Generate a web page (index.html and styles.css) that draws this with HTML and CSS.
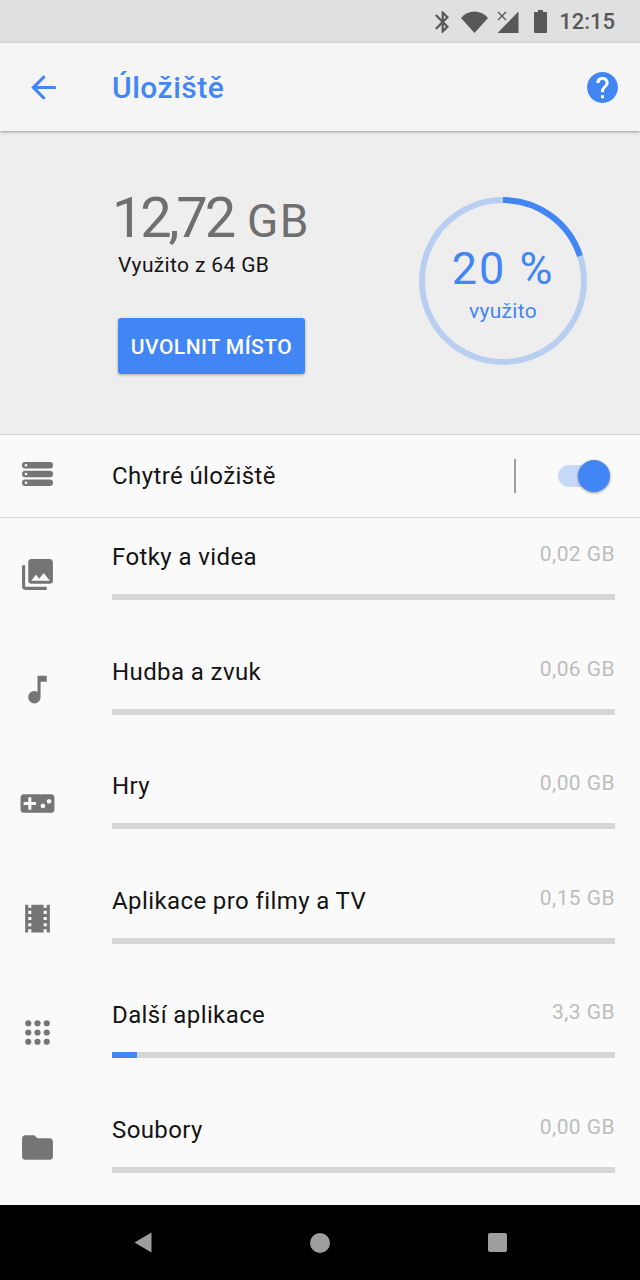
FILE: index.html
```html
<!DOCTYPE html>
<html lang="cs">
<head>
    <meta charset="UTF-8">
    <meta name="viewport" content="width=device-width, initial-scale=1.0">
    <title>Úložiště</title>
    <link rel="stylesheet" href="styles.css">
</head>
<body>
    <div class="status-bar">
        <svg class="st-bluetooth" viewBox="5 2 12.71 20"><path d="M17.71 7.71L12 2h-1v7.59L6.41 5 5 6.41 10.59 12 5 17.59 6.41 19 11 14.41V22h1l5.71-5.71-4.3-4.29 4.3-4.29zM13 5.83l1.88 1.88L13 9.59V5.83zm1.88 10.46L13 18.17v-3.76l1.88 1.88z"/></svg>
        <svg class="st-wifi" viewBox="0 0 27 22"><path d="M0 7C3.500 2.800 8 .5 13.500 .5S23.500 2.800 27 7L13.500 22Z"/></svg>
        <svg class="st-signal" viewBox="0 0 22 22"><path d="M21.500 .5V22H.5Z"/><path class="st-cross" d="M1 1L9 9M9 1L1 9"/></svg>
        <svg class="st-battery" viewBox="0 0 13 23"><path d="M4 0h5v2h3a1 1 0 0 1 1 1v19a1 1 0 0 1-1 1H1a1 1 0 0 1-1-1V3a1 1 0 0 1 1-1h3z"/></svg>
        <span class="st-time">12:15</span>
    </div>

    <div class="toolbar">
        <svg class="icon icon-blue" viewBox="0 0 24 24"><path d="M20 11H7.830l5.590-5.590L12 4l-8 8 8 8 1.410-1.410L7.830 13H20v-2z"/></svg>
        <div class="toolbar-title">Úložiště</div>
        <svg class="icon icon-blue" viewBox="0 0 24 24"><circle class="help-bg" cx="12" cy="12" r="7"/><path d="M12 2C6.480 2 2 6.480 2 12s4.480 10 10 10 10-4.480 10-10S17.520 2 12 2zm1 17h-2v-2h2v2zm2.070-7.750l-.9.920C13.450 12.900 13 13.500 13 15h-2v-.5c0-1.100.45-2.100 1.170-2.830l1.240-1.260c.37-.36.59-.86.59-1.410 0-1.100-.9-2-2-2s-2 .9-2 2H8c0-2.210 1.790-4 4-4s4 1.790 4 4c0 .88-.36 1.680-.93 2.250z"/></svg>
    </div>

    <div class="summary">
        <div class="summary-left">
            <div class="used"><span class="used-num">12,72</span><span class="used-unit">GB</span></div>
            <div class="used-of">Využito z 64 GB</div>
            <div class="free-btn">UVOLNIT MÍSTO</div>
        </div>
        <div class="gauge">
            <svg class="gauge-ring" viewBox="0 0 168 168">
                <circle class="gauge-track" cx="84" cy="84" r="81"/>
                <path class="gauge-value" d="M84 3A81 81 0 0 1 161 59"/>
            </svg>
            <div class="gauge-text">
                <div class="gauge-pct">20 %</div>
                <div class="gauge-label">využito</div>
            </div>
        </div>
    </div>

    <div class="smart-row">
        <div class="icon-col">
            <svg class="icon" viewBox="0 0 37 37">
                <rect x="3" y="4" width="31" height="6.400" rx="3.200"/>
                <rect x="3" y="12.800" width="31" height="6.400" rx="3.200"/>
                <rect x="3" y="21.600" width="31" height="6.400" rx="3.200"/>
                <circle class="icon-hole" cx="7" cy="7.200" r="1.300"/>
                <circle class="icon-hole" cx="7" cy="16" r="1.300"/>
                <circle class="icon-hole" cx="7" cy="24.800" r="1.300"/>
            </svg>
        </div>
        <div class="smart-title">Chytré úložiště</div>
        <div class="smart-divider"></div>
        <div class="switch"><div class="switch-thumb"></div></div>
    </div>

    <div class="list">
        <div class="item">
            <div class="icon-col"><svg class="icon" viewBox="0 0 24 24"><path d="M22 16V4c0-1.100-.9-2-2-2H8c-1.100 0-2 .9-2 2v12c0 1.100.9 2 2 2h12c1.100 0 2-.9 2-2zm-11-4l2.030 2.710L16 11l4 5H8l3-4zM2 6v14c0 1.100.9 2 2 2h14v-2H4V6H2z"/></svg></div>
            <div class="item-body">
                <div class="item-head"><span class="item-title">Fotky a videa</span><span class="item-size">0,02 GB</span></div>
                <div class="bar"></div>
            </div>
        </div>
        <div class="item">
            <div class="icon-col"><svg class="icon" viewBox="0 0 24 24"><path d="M12 3v10.550c-.59-.34-1.270-.55-2-.55-2.210 0-4 1.790-4 4s1.790 4 4 4 4-1.790 4-4V7h4V3h-6z"/></svg></div>
            <div class="item-body">
                <div class="item-head"><span class="item-title">Hudba a zvuk</span><span class="item-size">0,06 GB</span></div>
                <div class="bar"></div>
            </div>
        </div>
        <div class="item">
            <div class="icon-col"><svg class="icon" viewBox="0 0 24 24"><path d="M21 6H3c-1.100 0-2 .9-2 2v8c0 1.100.9 2 2 2h18c1.100 0 2-.9 2-2V8c0-1.100-.9-2-2-2zm-10 7H8v3H6v-3H3v-2h3V8h2v3h3v2zm4.500 2c-.83 0-1.500-.67-1.500-1.500s.67-1.500 1.500-1.500 1.500.67 1.500 1.500-.67 1.500-1.500 1.500zm4-3c-.83 0-1.500-.67-1.500-1.500S18.670 9 19.500 9s1.500.67 1.500 1.500-.67 1.500-1.500 1.500z"/></svg></div>
            <div class="item-body">
                <div class="item-head"><span class="item-title">Hry</span><span class="item-size">0,00 GB</span></div>
                <div class="bar"></div>
            </div>
        </div>
        <div class="item">
            <div class="icon-col"><svg class="icon" viewBox="0 0 24 24"><path d="M18 3v2h-2V3H8v2H6V3H4v18h2v-2h2v2h8v-2h2v2h2V3h-2zM8 17H6v-2h2v2zm0-4H6v-2h2v2zm0-4H6V7h2v2zm10 8h-2v-2h2v2zm0-4h-2v-2h2v2zm0-4h-2V7h2v2z"/></svg></div>
            <div class="item-body">
                <div class="item-head"><span class="item-title">Aplikace pro filmy a TV</span><span class="item-size">0,15 GB</span></div>
                <div class="bar"></div>
            </div>
        </div>
        <div class="item">
            <div class="icon-col"><svg class="icon" viewBox="0 0 24 24"><circle cx="6" cy="6" r="2"/><circle cx="12" cy="6" r="2"/><circle cx="18" cy="6" r="2"/><circle cx="6" cy="12" r="2"/><circle cx="12" cy="12" r="2"/><circle cx="18" cy="12" r="2"/><circle cx="6" cy="18" r="2"/><circle cx="12" cy="18" r="2"/><circle cx="18" cy="18" r="2"/></svg></div>
            <div class="item-body">
                <div class="item-head"><span class="item-title">Další aplikace</span><span class="item-size">3,3 GB</span></div>
                <div class="bar"><div class="bar-fill" style="width: 5%"></div></div>
            </div>
        </div>
        <div class="item">
            <div class="icon-col"><svg class="icon" viewBox="0 0 24 24"><path d="M10 4H4c-1.100 0-1.990.9-1.990 2L2 18c0 1.100.9 2 2 2h16c1.100 0 2-.9 2-2V8c0-1.100-.9-2-2-2h-8l-2-2z"/></svg></div>
            <div class="item-body">
                <div class="item-head"><span class="item-title">Soubory</span><span class="item-size">0,00 GB</span></div>
                <div class="bar"></div>
            </div>
        </div>
    </div>

    <div class="nav-bar">
        <svg class="nav-back" viewBox="0 0 18 21"><path d="M17.500 .5V20.500L.5 10.500Z"/></svg>
        <div class="nav-home"></div>
        <div class="nav-recent"></div>
    </div>
</body>
</html>
```

FILE: styles.css
```css
* {
    box-sizing: border-box;
}
body {
    font-family: Roboto, "Liberation Sans", sans-serif;
    background-color: #fafafa;
    color: #141414;
    display: flex;
    flex-direction: column;
    height: 1280px;
    margin: 0;
    overflow: hidden;
}
.status-bar {
    height: 43px;
    flex-shrink: 0;
    background: #e0e0e0;
    display: flex;
    align-items: center;
    justify-content: flex-end;
    padding-right: 25px;
    fill: #585858;
    color: #585858;
}
.st-bluetooth {
    width: 14px;
    height: 22px;
}
.st-wifi {
    width: 27px;
    height: 22px;
    margin-left: 12px;
}
.st-signal {
    width: 22px;
    height: 22px;
    margin-left: 9px;
}
.st-cross {
    fill: none;
    stroke: #585858;
    stroke-width: 1.4;
}
.st-battery {
    width: 13px;
    height: 23px;
    margin-left: 15px;
}
.st-time {
    font-size: 22px;
    font-weight: 500;
    margin-left: 12px;
}
.toolbar {
    height: 88px;
    flex-shrink: 0;
    background: #f5f5f5;
    display: flex;
    align-items: center;
    padding: 0 19px 0 25px;
    box-shadow: 0 1px 3px rgba(0, 0, 0, 0.35);
    position: relative;
}
.toolbar-title {
    flex: 1;
    font-size: 30px;
    font-weight: 500;
    letter-spacing: 0.5px;
    color: #4285f4;
    margin-left: 50px;
}
.icon {
    width: 37px;
    height: 37px;
    fill: #757575;
    display: block;
}
.icon-blue {
    fill: #4285f4;
}
.icon-hole {
    fill: #fafafa;
}
.help-bg {
    fill: #fff;
}
.summary {
    height: 304px;
    flex-shrink: 0;
    background: #eeeeee;
    border-bottom: 1px solid #d6d6d6;
    display: flex;
    justify-content: space-between;
    padding: 66px 53px 0 112px;
}
.used {
    color: #6f6f6f;
    height: 42px;
    line-height: 42px;
    white-space: nowrap;
}
.used-num {
    font-size: 56px;
    letter-spacing: -3.200px;
}
.used-unit {
    font-size: 46px;
    letter-spacing: 1.500px;
    margin-left: 14px;
}
.used-of {
    font-size: 21px;
    letter-spacing: 0.35px;
    margin: 14px 0 0 6px;
    line-height: 25px;
}
.free-btn {
    width: 187px;
    height: 56px;
    margin: 40px 0 0 6px;
    padding-top: 2px;
    background: #4285f4;
    color: #fff;
    font-size: 21px;
    font-weight: 500;
    letter-spacing: 0.5px;
    border-radius: 3px;
    display: flex;
    align-items: center;
    justify-content: center;
    box-shadow: 0 1px 3px rgba(0, 0, 0, 0.3);
}
.gauge {
    width: 168px;
    height: 168px;
    display: grid;
}
.gauge-ring,
.gauge-text {
    grid-area: 1 / 1;
}
.gauge-track {
    fill: none;
    stroke: #b9cff1;
    stroke-width: 6;
}
.gauge-value {
    fill: none;
    stroke: #4285f4;
    stroke-width: 6;
}
.gauge-text {
    text-align: center;
    color: #4285f4;
    padding-top: 45px;
}
.gauge-pct {
    font-size: 45px;
    letter-spacing: 2px;
    line-height: 54px;
}
.gauge-label {
    font-size: 21px;
    letter-spacing: 0.3px;
    line-height: 25px;
    margin-top: 3px;
}
.smart-row {
    height: 83px;
    flex-shrink: 0;
    border-bottom: 1px solid #d6d6d6;
    display: flex;
    align-items: center;
}
.icon-col {
    width: 112px;
    flex-shrink: 0;
    padding-left: 19px;
}
.smart-title {
    flex: 1;
    font-size: 24px;
    letter-spacing: 0.4px;
}
.smart-divider {
    width: 2px;
    height: 34px;
    background: #a0a0a0;
    margin-right: 42px;
}
.switch {
    width: 46px;
    height: 22px;
    background: #c6d9f8;
    border-radius: 11px;
    margin-right: 36px;
    display: flex;
    align-items: center;
    justify-content: flex-end;
}
.switch-thumb {
    width: 32px;
    height: 32px;
    flex-shrink: 0;
    margin-right: -6px;
    background: #4285f4;
    border-radius: 50%;
    box-shadow: 0 1px 3px rgba(0, 0, 0, 0.4);
}
.list {
    flex: 1;
    display: grid;
    grid-auto-rows: 1fr;
}
.item {
    display: flex;
    align-items: flex-start;
    padding: 0 25px 0 0;
}
.item .icon-col {
    padding-top: 38px;
}
.item-body {
    flex: 1;
    padding-top: 24px;
}
.item-head {
    display: flex;
    justify-content: space-between;
    align-items: flex-start;
    height: 52px;
}
.item-title {
    font-size: 24px;
    letter-spacing: 0.4px;
    line-height: 30px;
}
.item-size {
    font-size: 21px;
    letter-spacing: 0.43px;
    line-height: 25px;
    color: #bdbdbd;
}
.bar {
    height: 6px;
    background: #d6d6d6;
}
.bar-fill {
    height: 6px;
    background: #4285f4;
}
.nav-bar {
    height: 75px;
    flex-shrink: 0;
    background: #000;
    display: flex;
    align-items: center;
    justify-content: center;
    gap: 158px;
}
.nav-back {
    width: 18px;
    height: 21px;
    fill: #9e9e9e;
}
.nav-home {
    width: 20px;
    height: 20px;
    border-radius: 50%;
    background: #9e9e9e;
}
.nav-recent {
    width: 19px;
    height: 19px;
    border-radius: 2px;
    background: #9e9e9e;
}
```
